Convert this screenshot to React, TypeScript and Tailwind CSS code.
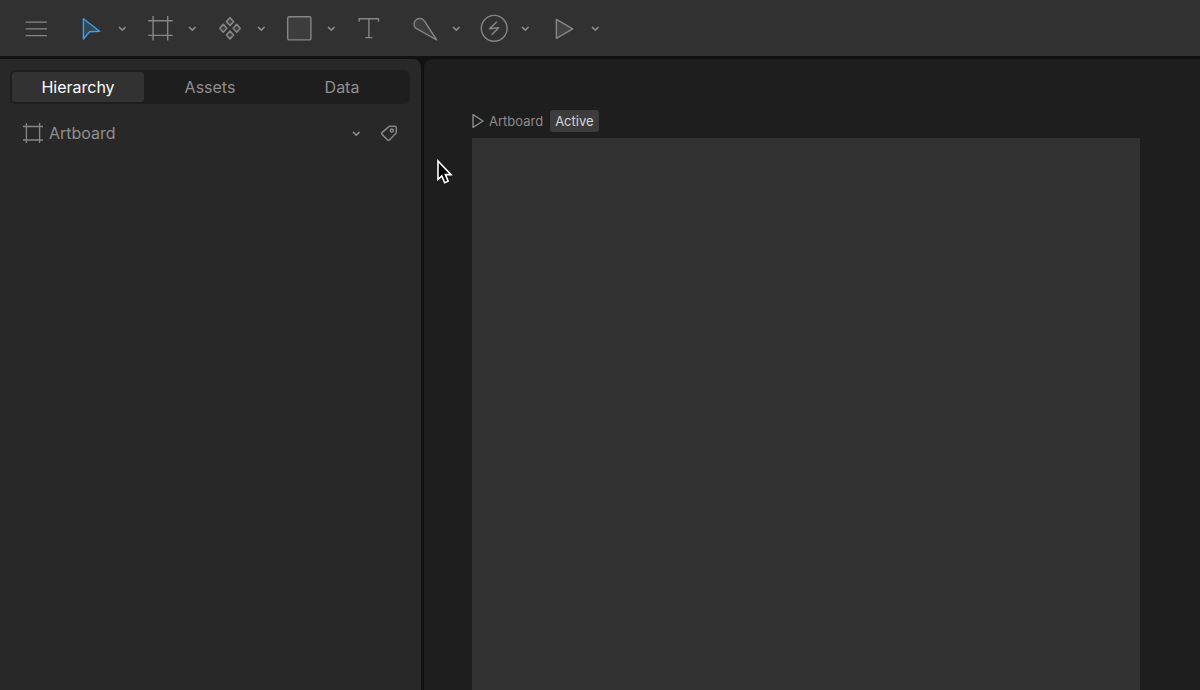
import type { ReactNode } from "react";

function Chevron({ label }: { label: string }) {
  return (
    <button type="button" aria-label={label} className="flex h-7 w-3.5 items-center justify-center text-[#8c8c8c]">
      <svg width="8" height="6" viewBox="0 0 8 6" fill="none" stroke="currentColor" strokeWidth="1.5" strokeLinecap="round" strokeLinejoin="round">
        <path d="M1.4 2.4 4.3 5.1 7.1 2.4" />
      </svg>
    </button>
  );
}

function ToolButton({ label, children }: { label: string; children: ReactNode }) {
  return (
    <button type="button" aria-label={label} className="flex size-7 shrink-0 items-center justify-center">
      <svg width="28" height="28" viewBox="0 0 28 28" fill="none" stroke="currentColor" strokeWidth="1.4" strokeLinejoin="round">
        {children}
      </svg>
    </button>
  );
}

function ToolGroup({ label, children }: { label: string; children: ReactNode }) {
  return (
    <div className="flex flex-1 items-center gap-2.5">
      <ToolButton label={label}>{children}</ToolButton>
      <Chevron label={`${label} options`} />
    </div>
  );
}

function Toolbar() {
  return (
    <header className="flex h-14 shrink-0 items-center bg-[#313131] pl-[22px] text-[#868686]">
      <div className="mr-[27px] flex">
        <ToolButton label="Menu">
          <path d="M3.5 8.1h21.5M3.5 14.9h21.5M3.5 21.6h21.5" strokeWidth="1.4" />
        </ToolButton>
      </div>
      <div className="flex w-[278px]">
        <ToolGroup label="Select">
          <path d="M6.4 4.8 22.6 17.2 12.6 17.7 6.4 25Z" fill="#38a0f0" fillOpacity="0.2" stroke="#38a0f0" />
        </ToolGroup>
        <ToolGroup label="Artboard tool">
          <path d="M6.1 2v24.5M20.7 2v24.5M1.2 6.8h24.6M1.2 21.4h24.6" strokeWidth="1.4" />
        </ToolGroup>
        <ToolGroup label="Components">
          <g strokeWidth="1.6" fill="#868686" fillOpacity="0.15">
            <path d="M14 3.7 17.5 7.6 14 11.5 10.5 7.6Z" />
            <path d="M7.3 10.4 10.8 14.3 7.3 18.2 3.8 14.3Z" />
            <path d="M20.7 10.4 24.2 14.3 20.7 18.2 17.2 14.3Z" />
            <path d="M14 17.1 17.5 21 14 24.9 10.5 21Z" />
          </g>
        </ToolGroup>
        <ToolGroup label="Shape">
          <rect x="1.7" y="2.7" width="23.2" height="23.2" rx="1.5" fill="#3d3d3d" />
        </ToolGroup>
      </div>
      <div className="mr-7 flex">
        <ToolButton label="Text">
          <path d="M4.2 7.8V4.7h19.3v3.1M13.9 4.7v18.8M10.3 23.6h7.2" />
        </ToolButton>
      </div>
      <div className="flex w-52">
        <ToolGroup label="Pen">
          <path d="M25.7 26 4.3 13.8A5.6 5.6 0 1 1 13.2 6.6Z" fill="#3d3d3d" />
        </ToolGroup>
        <ToolGroup label="Events">
          <circle cx="14.2" cy="14.3" r="12.9" />
          <path d="M16.9 7.8 9.5 14.8 18.7 13.7 11.7 20.8" strokeWidth="1.5" />
        </ToolGroup>
        <ToolGroup label="Play">
          <path d="M6.4 5.3v19L22.7 14.8Z" fill="#434343" />
        </ToolGroup>
      </div>
    </header>
  );
}

function Sidebar() {
  const tabs = ["Hierarchy", "Assets", "Data"];
  return (
    <aside className="w-[421px] shrink-0 rounded-tr-lg bg-[#282828] px-2.5 pt-[11px]">
      <div role="tablist" className="mr-px grid h-[34px] grid-cols-3 rounded-md bg-[#1e1e1e] p-0.5">
        {tabs.map((tab, i) => (
          <button
            key={tab}
            type="button"
            role="tab"
            aria-selected={i === 0}
            className={
              i === 0
                ? "rounded-[3px] bg-[#323232] text-base text-white"
                : "rounded-[3px] text-base text-[#8f8f8f]"
            }
          >
            {tab}
          </button>
        ))}
      </div>
      <div className="mt-[15px] flex h-7 items-center px-3 text-[#868686]">
        <svg width="22" height="22" viewBox="0 0 22 22" fill="none" stroke="currentColor" strokeWidth="1.3">
          <path d="M4.4 1v20M17.6 1v20M1 4.5h20M1 18h20" />
        </svg>
        <span className="ml-[5px] text-base text-[#8f8f8f]">Artboard</span>
        <div className="ml-auto flex items-center gap-4">
          <Chevron label="Artboard options" />
          <button type="button" aria-label="Tag" className="flex">
            <svg width="20" height="20" viewBox="0 0 20 20" fill="none" stroke="currentColor" strokeWidth="1.5" strokeLinejoin="round">
              <path d="M11 3.2h5q1.3 0 1.3 1.3V9.4q0 .5-.4.9L10.4 17q-.9.8-1.8 0L3 11.4q-.8-.9 0-1.8L9.9 3.6Q10.4 3.2 11 3.2Z" />
              <circle cx="12.8" cy="7.6" r="1.5" />
            </svg>
          </button>
        </div>
      </div>
    </aside>
  );
}

function Stage() {
  return (
    <main className="relative flex flex-1 flex-col rounded-tl-lg bg-[#1e1e1e] pt-[51px] pr-[60px] pl-12">
      <div className="flex h-[22px] items-center text-[13px] leading-[22px]">
        <svg width="12" height="16" viewBox="0 0 12 16" fill="none" stroke="#8c8c8c" strokeWidth="1.4" strokeLinejoin="round">
          <path d="M1 1.7v12.6L11 8Z" />
        </svg>
        <span className="ml-[5px] text-[#8c8c8c]">Artboard</span>
        <span className="ml-[7px] rounded-[3px] bg-[#3c3c3c] px-[5px] text-[#d6d6d6]">Active</span>
      </div>
      <section aria-label="Artboard" className="mt-1.5 flex-1 bg-[#313131]" />
      <svg className="absolute top-[99px] left-3" width="20" height="28" viewBox="0 0 20 28" fill="#000" stroke="#fff" strokeWidth="1.6">
        <path d="M2 3v18.5L5.8 17.9 8.7 24.7 12.1 23.2 9.4 16.6H15Z" />
      </svg>
    </main>
  );
}

export default function App() {
  return (
    <div className="flex min-h-screen flex-col bg-[#111111] font-['Inter',sans-serif]">
      <Toolbar />
      <div className="flex flex-1 gap-[3px] pt-[3px]">
        <Sidebar />
        <Stage />
      </div>
    </div>
  );
}
